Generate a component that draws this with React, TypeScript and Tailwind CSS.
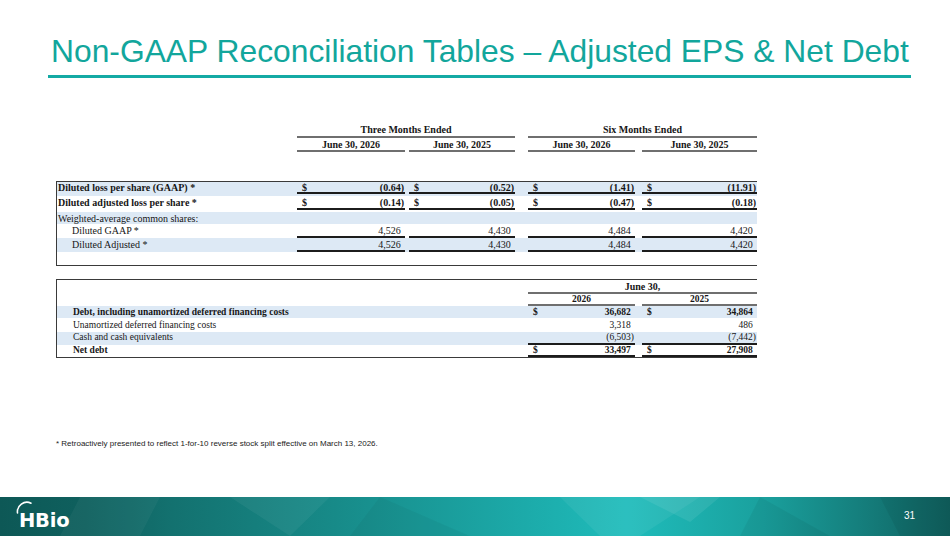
import React from 'react';

const BLUE = 'bg-[#dde9f5]';

function Val({
  w,
  d,
  v,
  h,
  under,
}: {
  w: string;
  d?: boolean;
  v: string;
  h: string;
  under: string;
}) {
  const neg = v.endsWith(')');
  return (
    <div className={`${w} ${h} box-border flex shrink-0 items-center justify-between pl-[5px] pr-[1px] ${under}`}>
      <span>{d ? '$' : ''}</span>
      <span>
        {v}
        {!neg && v ? <span className="invisible">)</span> : null}
      </span>
    </div>
  );
}

type Row1 = {
  label: string;
  bold?: boolean;
  indent?: boolean;
  bg: string;
  rowH: string;
  cellH: string;
  d?: boolean;
  vals?: string[];
};

const rows1: Row1[] = [
  { label: 'Diluted loss per share (GAAP) *', bold: true, bg: BLUE, rowH: 'h-[14px]', cellH: 'h-[12px]', d: true, vals: ['(0.64)', '(0.52)', '(1.41)', '(11.91)'] },
  { label: 'Diluted adjusted loss per share *', bold: true, bg: 'bg-white', rowH: 'h-[16px]', cellH: 'h-[14px]', d: true, vals: ['(0.14)', '(0.05)', '(0.47)', '(0.18)'] },
  { label: 'Weighted-average common shares:', bg: BLUE, rowH: 'h-[12px]', cellH: 'h-[12px]' },
  { label: 'Diluted GAAP *', indent: true, bg: 'bg-white', rowH: 'h-[14px]', cellH: 'h-[14px]', vals: ['4,526', '4,430', '4,484', '4,420'] },
  { label: 'Diluted Adjusted *', indent: true, bg: BLUE, rowH: 'h-[14px]', cellH: 'h-[14px]', vals: ['4,526', '4,430', '4,484', '4,420'] },
];

const UL = 'border-b-2 border-[#1c1c1c]';
const HL = 'border-b-2 border-[#6f6f6f]';

function Table1() {
  return (
    <div className="ml-[56px] font-['Liberation_Serif',serif] text-[10px] leading-[11px] text-[#161616]">
      {/* header */}
      <div className="mt-[46px] flex font-bold">
        <div className="w-[241px] shrink-0" />
        <div className={`h-[14px] w-[218px] shrink-0 box-border text-center ${HL}`}>Three Months Ended</div>
        <div className="w-[13px] shrink-0" />
        <div className={`h-[14px] w-[229px] shrink-0 box-border text-center ${HL}`}>Six Months Ended</div>
      </div>
      <div className="flex font-bold">
        <div className="w-[241px] shrink-0" />
        <div className={`h-[14px] w-[108px] shrink-0 box-border pt-[1px] text-center ${HL}`}>June 30, 2026</div>
        <div className="w-[4px] shrink-0" />
        <div className={`h-[14px] w-[106px] shrink-0 box-border pt-[1px] text-center ${HL}`}>June 30, 2025</div>
        <div className="w-[13px] shrink-0" />
        <div className={`h-[14px] w-[107px] shrink-0 box-border pt-[1px] text-center ${HL}`}>June 30, 2026</div>
        <div className="w-[7px] shrink-0" />
        <div className={`h-[14px] w-[115px] shrink-0 box-border pt-[1px] text-center ${HL}`}>June 30, 2025</div>
      </div>
      {/* box */}
      <div className="mt-[29px] w-[701px] border-t border-b border-l border-[#3a3a3a]">
        {rows1.map((r, i) => (
          <div key={i} className={`flex items-start ${r.bg} ${r.rowH} ${r.bold ? 'font-bold' : ''}`}>
            <div className={`w-[240px] shrink-0 ${r.cellH} box-border flex items-center ${r.vals ? 'border-b-2 border-transparent' : ''} ${r.indent ? 'pl-[15px]' : 'pl-[1px]'}`}>
              {r.label}
            </div>
            {r.vals ? (
              <>
                <Val w="w-[108px]" h={r.cellH} d={r.d} v={r.vals[0]} under={UL} />
                <div className="w-[4px] shrink-0" />
                <Val w="w-[106px]" h={r.cellH} d={r.d} v={r.vals[1]} under={UL} />
                <div className="w-[13px] shrink-0" />
                <Val w="w-[107px]" h={r.cellH} d={r.d} v={r.vals[2]} under={UL} />
                <div className="w-[7px] shrink-0" />
                <Val w="w-[115px]" h={r.cellH} d={r.d} v={r.vals[3]} under={UL} />
              </>
            ) : null}
          </div>
        ))}
        <div className="h-[13px]" />
      </div>
    </div>
  );
}

type Row2 = { label: string; bold?: boolean; bg: string; rowH: string; cellH: string; under: string; d?: boolean; vals: string[] };

const rows2: Row2[] = [
  { label: 'Debt, including unamortized deferred financing costs', bold: true, bg: BLUE, rowH: 'h-[12px]', cellH: 'h-[12px]', under: '', d: true, vals: ['36,682', '34,864'] },
  { label: 'Unamortized deferred financing costs', bg: 'bg-white', rowH: 'h-[14px]', cellH: 'h-[14px]', under: '', vals: ['3,318', '486'] },
  { label: 'Cash and cash equivalents', bg: BLUE, rowH: 'h-[13px]', cellH: 'h-[13px]', under: UL, vals: ['(6,503)', '(7,442)'] },
  { label: 'Net debt', bold: true, bg: 'bg-white', rowH: 'h-[12px]', cellH: 'h-[12px]', under: UL, d: true, vals: ['33,497', '27,908'] },
];

function Table2() {
  return (
    <div className="ml-[56px] mt-[13px] w-[701px] border-t border-b border-l border-[#3a3a3a] font-['Liberation_Serif',serif] text-[9.5px] leading-[11px] text-[#161616]">
      <div className="flex font-bold">
        <div className="w-[471px] shrink-0" />
        <div className={`h-[14px] w-[229px] shrink-0 box-border pt-[1px] text-center text-[10px] ${HL}`}>June 30,</div>
      </div>
      <div className="flex font-bold">
        <div className="w-[471px] shrink-0" />
        <div className={`h-[12px] w-[107px] shrink-0 box-border text-center ${HL}`}>2026</div>
        <div className="w-[7px] shrink-0" />
        <div className={`h-[12px] w-[115px] shrink-0 box-border text-center ${HL}`}>2025</div>
      </div>
      {rows2.map((r, i) => (
        <div key={i} className={`flex items-start ${r.bg} ${r.rowH} ${r.bold ? 'font-bold' : ''}`}>
          <div className={`w-[471px] shrink-0 ${r.cellH} box-border flex items-center pl-[16px] ${r.under ? 'border-b-2 border-transparent' : ''}`}>
            {r.label}
          </div>
          <Val w="w-[107px]" h={r.cellH} d={r.d} v={r.vals[0]} under={r.under} />
          <div className="w-[7px] shrink-0" />
          <Val w="w-[115px]" h={r.cellH} d={r.d} v={r.vals[1]} under={r.under} />
        </div>
      ))}
    </div>
  );
}

function Footer() {
  return (
    <div className="relative h-[39px] w-full shrink-0 overflow-hidden bg-[linear-gradient(90deg,#0d5856_0%,#0f605e_9%,#13716f_18%,#178a88_35%,#1caaa9_55%,#1fbcbb_66%,#1aa19e_80%,#147a78_92%,#0f5f5d_100%)]">
      <svg className="absolute inset-0" width="950" height="39" viewBox="0 0 950 39">
        <polygon points="80,0 160,0 140,39 60,39" fill="#ffffff" opacity="0.04" />
        <polygon points="230,0 330,0 290,39" fill="#ffffff" opacity="0.05" />
        <polygon points="380,0 470,39 350,39" fill="#000000" opacity="0.04" />
        <polygon points="560,0 700,0 640,39 600,39" fill="#ffffff" opacity="0.06" />
        <polygon points="640,0 720,0 690,25" fill="#ffffff" opacity="0.08" />
        <polygon points="760,0 830,39 740,39" fill="#000000" opacity="0.05" />
        <polygon points="880,0 950,0 950,39 900,39" fill="#000000" opacity="0.06" />
      </svg>
      <div className="relative flex h-full items-center justify-between pl-[19px] pr-[35px]">
        <div className="relative mt-[8px]">
          <svg className="absolute left-[-3px] top-[-8px]" width="20" height="14" viewBox="0 0 20 14">
            <path d="M1.5 12 A 9.5 9.5 0 0 1 15 2.2" fill="none" stroke="#ffffff" strokeWidth="1.6" strokeLinecap="round" />
          </svg>
          <span className="font-['DejaVu_Sans',sans-serif] text-[19.5px] font-bold leading-[20px] tracking-[-0.2px] text-white">
            HBio
          </span>
        </div>
        <span className="mt-[-2px] font-['Liberation_Sans',Arial,sans-serif] text-[10px] text-white">31</span>
      </div>
    </div>
  );
}

export default function App() {
  return (
    <div className="flex h-[536px] w-[950px] flex-col overflow-hidden bg-white">
      <div className="flex-1">
        <div className="ml-[51px] mt-[35px] font-['Liberation_Sans',Arial,sans-serif] text-[31.8px] leading-[32px] text-[#12a69c]">
          Non-GAAP Reconciliation Tables – Adjusted EPS &amp; Net Debt
        </div>
        <div className="ml-[48px] mt-[8px] h-[3px] w-[863px] bg-[#14aaa4]" />
        <Table1 />
        <Table2 />
        <div className="ml-[56px] mt-[81px] font-['Liberation_Sans',Arial,sans-serif] text-[8px] leading-[10px] text-[#222]">
          * Retroactively presented to reflect 1-for-10 reverse stock split effective on March 13, 2026.
        </div>
      </div>
      <Footer />
    </div>
  );
}
